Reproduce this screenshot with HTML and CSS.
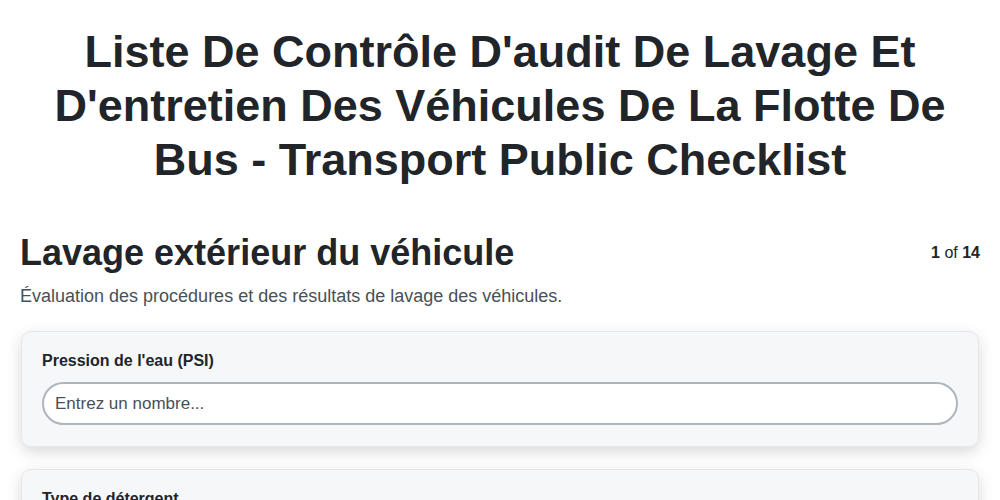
FILE: index.html
```html
<!DOCTYPE html>
<html lang="fr">
<head>
    <meta charset="UTF-8">
    <meta name="viewport" content="width=device-width, initial-scale=1.0">
    <title>Liste De Contrôle D'audit - Flotte De Bus</title>
    <link rel="stylesheet" href="styles.css">
</head>
<body>
    <div class="page">
        <h1 class="title">Liste De Contrôle D'audit De Lavage Et D'entretien Des Véhicules De La Flotte De Bus - Transport Public Checklist</h1>

        <div class="section-head">
            <h2 class="section-title">Lavage extérieur du véhicule</h2>
            <div class="step"><strong>1</strong> of <strong>14</strong></div>
        </div>
        <p class="section-desc">Évaluation des procédures et des résultats de lavage des véhicules.</p>

        <div class="card">
            <label class="field-label" for="psi">Pression de l'eau (PSI)</label>
            <input class="field-input" type="number" id="psi" placeholder="Entrez un nombre...">
        </div>

        <div class="card">
            <label class="field-label" for="detergent">Type de détergent</label>
            <input class="field-input" type="text" id="detergent" placeholder="Entrez du texte...">
        </div>
    </div>
</body>
</html>
```

FILE: styles.css
```css
body {
    margin: 0;
    font-family: "Liberation Sans", Arial, sans-serif;
    color: #212529;
    background-color: #fff;
}
.page {
    padding: 0 20px;
}
.title {
    margin: 25px 0 44px;
    font-size: 45px;
    line-height: 54px;
    text-align: center;
    font-weight: bold;
}
.section-head {
    display: flex;
    justify-content: space-between;
    align-items: center;
}
.section-title {
    margin: 0;
    font-size: 36px;
    line-height: 44px;
}
.step {
    font-size: 16px;
}
.section-desc {
    margin: 8px 0 21px;
    font-size: 18px;
    line-height: 27px;
    color: #495057;
}
.card {
    background-color: #f6f7f9;
    border: 1px solid #e5e7eb;
    border-radius: 10px;
    padding: 20px 20px 21px;
    margin: 0 1px 22px;
    box-shadow: 0 5px 15px rgba(0, 0, 0, 0.15);
}
.field-label {
    display: block;
    font-weight: bold;
    font-size: 16px;
    line-height: 18px;
    margin-bottom: 12px;
}
.field-input {
    display: block;
    box-sizing: border-box;
    width: 100%;
    height: 43px;
    padding: 0 11px;
    font-family: inherit;
    font-size: 17px;
    color: #212529;
    background: #fff;
    border: 2px solid #adb5bd;
    border-radius: 22px;
    outline: none;
}
.field-input::placeholder {
    color: #495057;
}
```
